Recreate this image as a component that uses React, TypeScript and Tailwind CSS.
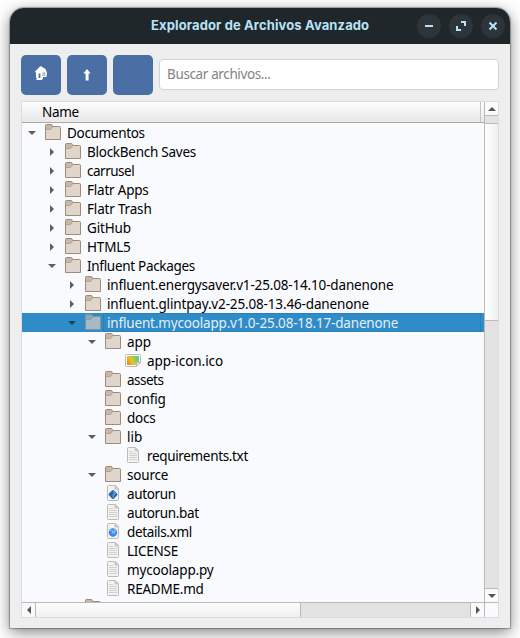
import React from "react";

type Icon = "folder" | "text" | "image" | "exec" | "xml";
type Row = { name: string; depth: number; icon?: Icon; arrow?: "open" | "closed"; selected?: boolean; spacing?: number };

const rows: Row[] = [
  { name: "Documentos", depth: 0, arrow: "open", spacing: -0.32 },
  { name: "BlockBench Saves", depth: 1, arrow: "closed", spacing: -0.26 },
  { name: "carrusel", depth: 1, arrow: "closed", spacing: -0.5 },
  { name: "Flatr Apps", depth: 1, arrow: "closed", spacing: -0.21 },
  { name: "Flatr Trash", depth: 1, arrow: "closed", spacing: -0.18 },
  { name: "GitHub", depth: 1, arrow: "closed", spacing: -0.17 },
  { name: "HTML5", depth: 1, arrow: "closed", spacing: -0.19 },
  { name: "Influent Packages", depth: 1, arrow: "open", spacing: -0.3 },
  { name: "influent.energysaver.v1-25.08-14.10-danenone", depth: 2, arrow: "closed", spacing: -0.16 },
  { name: "influent.glintpay.v2-25.08-13.46-danenone", depth: 2, arrow: "closed", spacing: -0.15 },
  { name: "influent.mycoolapp.v1.0-25.08-18.17-danenone", depth: 2, arrow: "open", selected: true, spacing: -0.17 },
  { name: "app", depth: 3, arrow: "open", spacing: -0.1 },
  { name: "app-icon.ico", depth: 4, icon: "image", spacing: -0.05 },
  { name: "assets", depth: 3, spacing: -0.5 },
  { name: "config", depth: 3, spacing: -0.1 },
  { name: "docs", depth: 3, spacing: -0.2 },
  { name: "lib", depth: 3, arrow: "open", spacing: 0 },
  { name: "requirements.txt", depth: 4, icon: "text", spacing: -0.34 },
  { name: "source", depth: 3, arrow: "open", spacing: -0.2 },
  { name: "autorun", depth: 3, icon: "exec", spacing: -0.35 },
  { name: "autorun.bat", depth: 3, icon: "text", spacing: -0.35 },
  { name: "details.xml", depth: 3, icon: "xml", spacing: -0.35 },
  { name: "LICENSE", depth: 3, icon: "text", spacing: -0.27 },
  { name: "mycoolapp.py", depth: 3, icon: "text", spacing: -0.16 },
  { name: "README.md", depth: 3, icon: "text", spacing: -0.22 },
  { name: "", depth: 2 },
];

function FileIcon({ kind, selected }: { kind: Icon; selected?: boolean }) {
  if (kind === "folder") {
    const fill = selected ? "#a6b9c5" : "#dfd5cb";
    const tab = selected ? "#8fa6b3" : "#c9b6a4";
    const line = selected ? "#7695a8" : "#9f8b7b";
    return (
      <svg width="16" height="16" viewBox="0 0 16 16" className="block">
        <path d="M.5 1.5q0-1 1-1h5l1.5 2h6.5q1 0 1 1v12H.5z" fill={fill} />
        <path d="M.5 5.5v-4q0-1 1-1h5L8 2.5 5.8 5.2z" fill={tab} />
        <path d="M.5 5.5h5L8 2.5" fill="none" stroke={line} strokeOpacity=".6" />
        <path d="M.5 1.5q0-1 1-1h5l1.5 2h6.5q1 0 1 1v12H.5z" fill="none" stroke={line} />
      </svg>
    );
  }
  if (kind === "image")
    return (
      <svg width="16" height="16" viewBox="0 0 16 16" className="block">
        <defs>
          <linearGradient id="spectrum" x1="0" y1=".7" x2="1" y2=".2">
            <stop offset="0" stopColor="#f48a22" />
            <stop offset=".4" stopColor="#e4c52c" />
            <stop offset=".7" stopColor="#8fca58" />
            <stop offset="1" stopColor="#55cd9a" />
          </linearGradient>
        </defs>
        <path d="M1.5 2.5h13q1 0 1 1v7l-4 4h-10q-1 0-1-1v-10q0-1 1-1z" fill="#fff" stroke="#bbb8b5" />
        <path d="M2 4h12v6l-3 3H2z" fill="url(#spectrum)" />
        <path d="M11.5 14.3v-3.8h3.8z" fill="#eee" stroke="#bbb8b5" />
      </svg>
    );
  return (
    <svg width="16" height="16" viewBox="0 0 16 16" className="block">
      <path d="M3.5.5h7l3 3v11q0 1-1 1h-9q-1 0-1-1v-13q0-1 1-1z" fill="#f4f3f2" stroke="#bebbb7" />
      <path d="M9.5.5h1l3 3v1h-4z" fill="#cac7c4" />
      {kind === "text" && <path d="M4 4.5h4M4 6.5h8M4 8.5h8M4 10.5h8M4 12.5h8" stroke="#d2d0ce" />}
      {kind === "exec" && (
        <>
          <path d="M8 6.6l2.9 2.9L8 12.4 5.1 9.5z" fill="#2864b4" stroke="#2864b4" strokeWidth="3" strokeLinejoin="round" />
          <path d="M8.4 6.3l1.6 2.5-1.8 1 .2 2.4" fill="none" stroke="#6ba2de" strokeWidth="1.3" />
        </>
      )}
      {kind === "xml" && (
        <>
          <circle cx="8" cy="9.5" r="4.2" fill="#3987e6" />
          <path d="M5 7l3 1-1 2.6M9 5.8l2 2-2 1 .5 2.4" fill="none" stroke="#8dc0f8" strokeWidth="1.2" />
        </>
      )}
    </svg>
  );
}

function Arrow({ dir, fill = "#555" }: { dir: "up" | "down" | "left" | "right"; fill?: string }) {
  const d = { up: "M0 6L4 2L8 6Z", down: "M0 2H8L4 6Z", left: "M6 0V8L2 4Z", right: "M2 0V8L6 4Z" }[dir];
  return (
    <svg width="8" height="8" viewBox="0 0 8 8" className="block shrink-0">
      <path d={d} fill={fill} />
    </svg>
  );
}

const toolButton = "flex size-10 items-center justify-center rounded-[5px] bg-[#4a6fa5] text-white";
const winButton = "flex size-6 items-center justify-center rounded-full bg-[#2d353b]";

export default function App() {
  return (
    <div className="h-[638px] w-[520px] overflow-hidden bg-white px-[10px] pt-2 font-['Noto_Sans','Open_Sans',sans-serif] text-black">
      <div className="h-[620px] w-[500px] overflow-hidden rounded-t-[14px] bg-[#eeeeee] shadow-[0_0_1px_1px_rgba(0,0,0,0.3),0_4px_15px_rgba(0,0,0,0.5)]">
        <div className="flex h-9 items-center bg-[#1f272a] pr-[5px]">
          <div className="w-[407px] shrink-0 pl-[141px] font-['Inter',sans-serif] text-[13px] font-bold tracking-[0.12px] whitespace-nowrap text-[#b9e2f8]">
            Explorador de Archivos Avanzado
          </div>
          <div className="flex gap-2">
            <div className={winButton}>
              <svg width="12" height="12"><path d="M2 6h8" stroke="#b9e2f8" strokeWidth="2" /></svg>
            </div>
            <div className={winButton}>
              <svg width="12" height="12"><path d="M6 2h4v4M2 6v4h4" fill="none" stroke="#b9e2f8" strokeWidth="2" /></svg>
            </div>
            <div className={winButton}>
              <svg width="12" height="12"><path d="M2.5 2.5l7 7M9.5 2.5l-7 7" stroke="#b9e2f8" strokeWidth="2" /></svg>
            </div>
          </div>
        </div>

        <div className="mt-[11px] ml-[11px] flex h-10 w-[478px] items-start gap-[6px]">
          <div className={toolButton}>
            <svg width="14" height="16" viewBox="0 0 14 16" className="-mt-1">
              <path d="M1 6.5L6.5 1l5 3 1.5 4-.5 4H9v1.5L7.5 15H2l1.2-2H2V8z" fill="white" />
              <path d="M4.6 8.5h1.8V13H4.6z" fill="#4a6fa5" />
              <path d="M8.5 7.5h1v1.3h-1zM10.2 7.5h1v1.3h-1zM8.5 9.5h1v1.3h-1zM10.2 9.5h1v1.3h-1z" fill="#4a6fa5" />
            </svg>
          </div>
          <div className={toolButton}>
            <svg width="8" height="12" viewBox="0 0 8 12" className="-mt-px">
              <path d="M4 0L7.6 4.4H5.6V11.5H2.6V4.4H.4Z" fill="white" />
            </svg>
          </div>
          <div className={toolButton} />
          <div className="mt-1 flex h-[31px] flex-1 items-center rounded-[4px] border border-[#cfd2dc] bg-white pl-[7px] text-[13.5px] tracking-[-0.37px] text-[#838383]">
            Buscar archivos...
          </div>
        </div>

        <div className="mt-[6px] ml-[11px] flex h-[517px] w-[478px] border border-[#dadce3] bg-[#f8fafd]">
          <div className="flex w-[462px] flex-col">
            <div className="flex h-[21px] shrink-0 border-b border-[#a9a9a9] bg-linear-to-b from-[#fdfdfd] to-[#e8e8e8]">
              <div className="flex w-[459px] items-center border-r border-[#c4c4c4] pt-px pl-5 text-[13.5px] tracking-[-0.3px]">Name</div>
            </div>
            <div className="h-[479px] shrink-0 overflow-hidden">
              {rows.map((r, i) => (
                <div
                  key={i}
                  className={`flex h-[19px] ${r.selected ? "bg-[#308cc6] text-[#e3eff8]" : ""}`}
                  style={{ paddingLeft: r.depth * 20 }}
                >
                  <div className={`flex w-[23px] shrink-0 items-start pl-[6px] ${r.arrow === "open" ? "pt-[5.5px]" : "pt-[6px]"}`}>
                    {r.arrow && <Arrow dir={r.arrow === "open" ? "down" : "right"} fill={r.selected ? "#134665" : "#5e5e5e"} />}
                  </div>
                  <div className="w-[18px] shrink-0 pt-px">
                    <FileIcon kind={r.icon ?? "folder"} selected={r.selected} />
                  </div>
                  <div
                    className={`h-[19px] flex-1 pt-px pl-[4px] text-[13.5px] leading-[19px] whitespace-nowrap ${r.selected ? "mr-[3px] outline -outline-offset-1 outline-[#287fb9]" : ""}`}
                    style={{ letterSpacing: r.spacing }}
                  >
                    {r.name}
                  </div>
                </div>
              ))}
            </div>
            <div className="flex h-[15px] shrink-0 border-t border-[#b9b9b9]">
              <div className="flex w-[14px] items-center justify-center border-r border-[#b9b9b9] bg-[#fafafa]"><Arrow dir="left" /></div>
              <div className="w-[265px] border-r border-[#b9b9b9] bg-linear-to-b from-[#fdfdfd] to-[#f0f0f0]" />
              <div className="flex-1 bg-[#e3e3e3]" />
              <div className="flex w-[14px] items-center justify-center border-l border-[#b9b9b9] bg-[#fafafa]"><Arrow dir="right" /></div>
            </div>
          </div>
          <div className="flex w-[14px] flex-col border-l border-[#b9b9b9]">
            <div className="flex h-[14px] items-center justify-center border-b border-[#b9b9b9] bg-[#fafafa]"><Arrow dir="up" /></div>
            <div className="h-[8px] border-b border-[#b9b9b9] bg-[#e3e3e3]" />
            <div className="h-[197px] border-b border-[#b9b9b9] bg-linear-to-r from-white to-[#f0f0f0]" />
            <div className="flex-1 bg-[#e3e3e3]" />
            <div className="flex h-[14px] items-center justify-center border-t border-[#b9b9b9] bg-[#fafafa]"><Arrow dir="down" /></div>
            <div className="h-[15px] border-t border-[#b9b9b9]" />
          </div>
        </div>
      </div>
    </div>
  );
}
